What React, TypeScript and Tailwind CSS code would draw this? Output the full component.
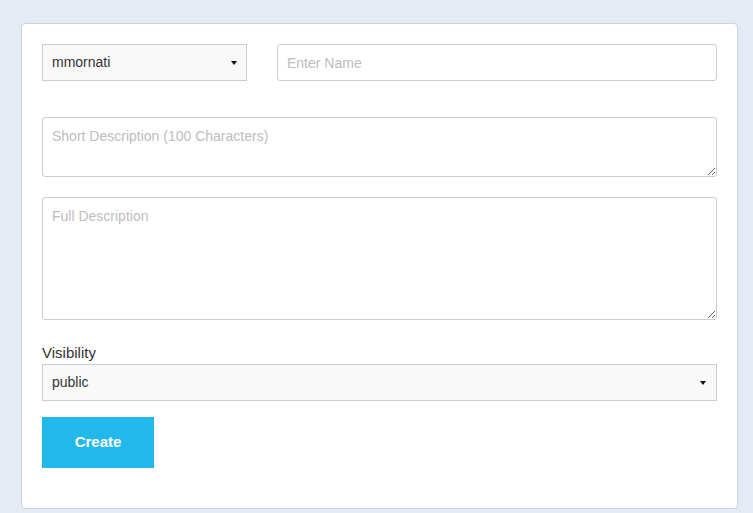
import React from "react";

function Caret() {
  return (
    <svg width="6" height="4" viewBox="0 0 6 4" className="shrink-0">
      <path d="M0 0 H6 L3 4 Z" fill="#111" />
    </svg>
  );
}

export default function App() {
  const font = { fontFamily: '"Liberation Sans", Arial, sans-serif' };
  return (
    <div className="min-h-[513px] w-full bg-[#e4ebf4] pt-[23px] pl-[21px] pr-[15px] pb-[5px]" style={font}>
      <div className="w-[717px] rounded-[4px] border border-[#ccd3dc] bg-white px-5 pt-5 pb-[40px]">
        <div className="flex gap-[30px]">
          <div className="flex h-[37px] w-[205px] items-center justify-between border border-[#cccccc] bg-[#f9f9f9] pl-[9px] pr-[9px] text-[14px] text-[#333]">
            <span>mmornati</span>
            <Caret />
          </div>
          <input
            className="h-[37px] flex-1 rounded-[3px] border border-[#cccccc] px-[9px] text-[14px] text-[#333] outline-none placeholder:text-[#bdbdbd]"
            placeholder="Enter Name"
          />
        </div>
        <textarea
          className="mt-[36px] block h-[60px] w-full rounded-[3px] border border-[#cccccc] px-[9px] pt-[9px] text-[14px] leading-[18px] text-[#333] outline-none placeholder:text-[#bdbdbd]"
          placeholder="Short Description (100 Characters)"
        />
        <textarea
          className="mt-[20px] block h-[123px] w-full rounded-[3px] border border-[#cccccc] px-[9px] pt-[9px] text-[14px] leading-[18px] text-[#333] outline-none placeholder:text-[#bdbdbd]"
          placeholder="Full Description"
        />
        <div className="mt-[21px] text-[15px] leading-[23px] text-[#333]">Visibility</div>
        <div className="flex h-[37px] w-full items-center justify-between border border-[#cccccc] bg-[#f9f9f9] pl-[9px] pr-[10px] text-[14px] text-[#333]">
          <span>public</span>
          <Caret />
        </div>
        <button className="mt-[16px] flex h-[51px] w-[112px] items-center justify-center bg-[#22b8eb] text-[15px] font-bold text-white">
          Create
        </button>
      </div>
    </div>
  );
}
